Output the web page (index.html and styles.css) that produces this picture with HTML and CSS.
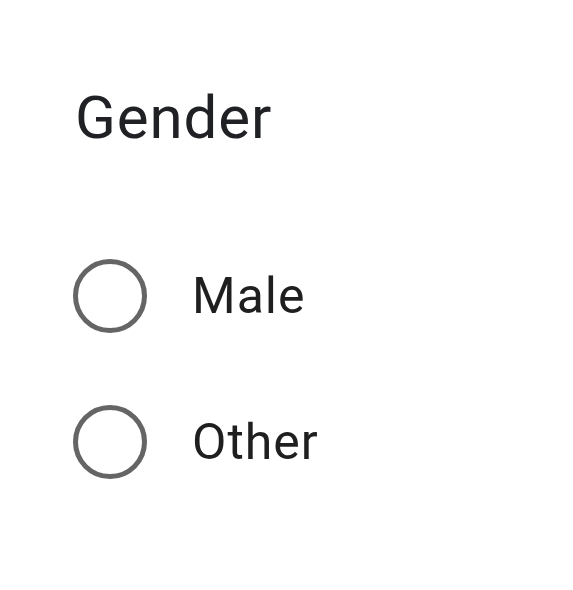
FILE: index.html
```html
<!DOCTYPE html>
<html>
<head>
<meta charset="utf-8">
<link rel="stylesheet" href="styles.css">
</head>
<body>
<div class="form">
  <div class="title">Gender</div>
  <div class="options">
    <label class="option"><span class="radio"></span><span class="label">Male</span></label>
    <label class="option"><span class="radio"></span><span class="label">Other</span></label>
  </div>
</div>
</body>
</html>
```
FILE: styles.css
```css
html, body {
  margin: 0;
  background: #ffffff;
}
.form {
  padding: 83px 0 0 75px;
  font-family: Roboto, "Liberation Sans", sans-serif;
  color: #202124;
}
.title {
  font-size: 60px;
  line-height: 70px;
  height: 70px;
  letter-spacing: 0.9px;
}
.options {
  margin-top: 70px;
  display: flex;
  flex-direction: column;
}
.option {
  height: 146px;
  display: flex;
  align-items: center;
  gap: 45px;
}
.radio {
  width: 74px;
  height: 74px;
  box-sizing: border-box;
  border: 5px solid #656565;
  border-radius: 50%;
  margin-left: -2px;
}
.label {
  font-size: 50px;
  line-height: 60px;
  letter-spacing: 1px;
  color: #1f1f1f;
}
```
